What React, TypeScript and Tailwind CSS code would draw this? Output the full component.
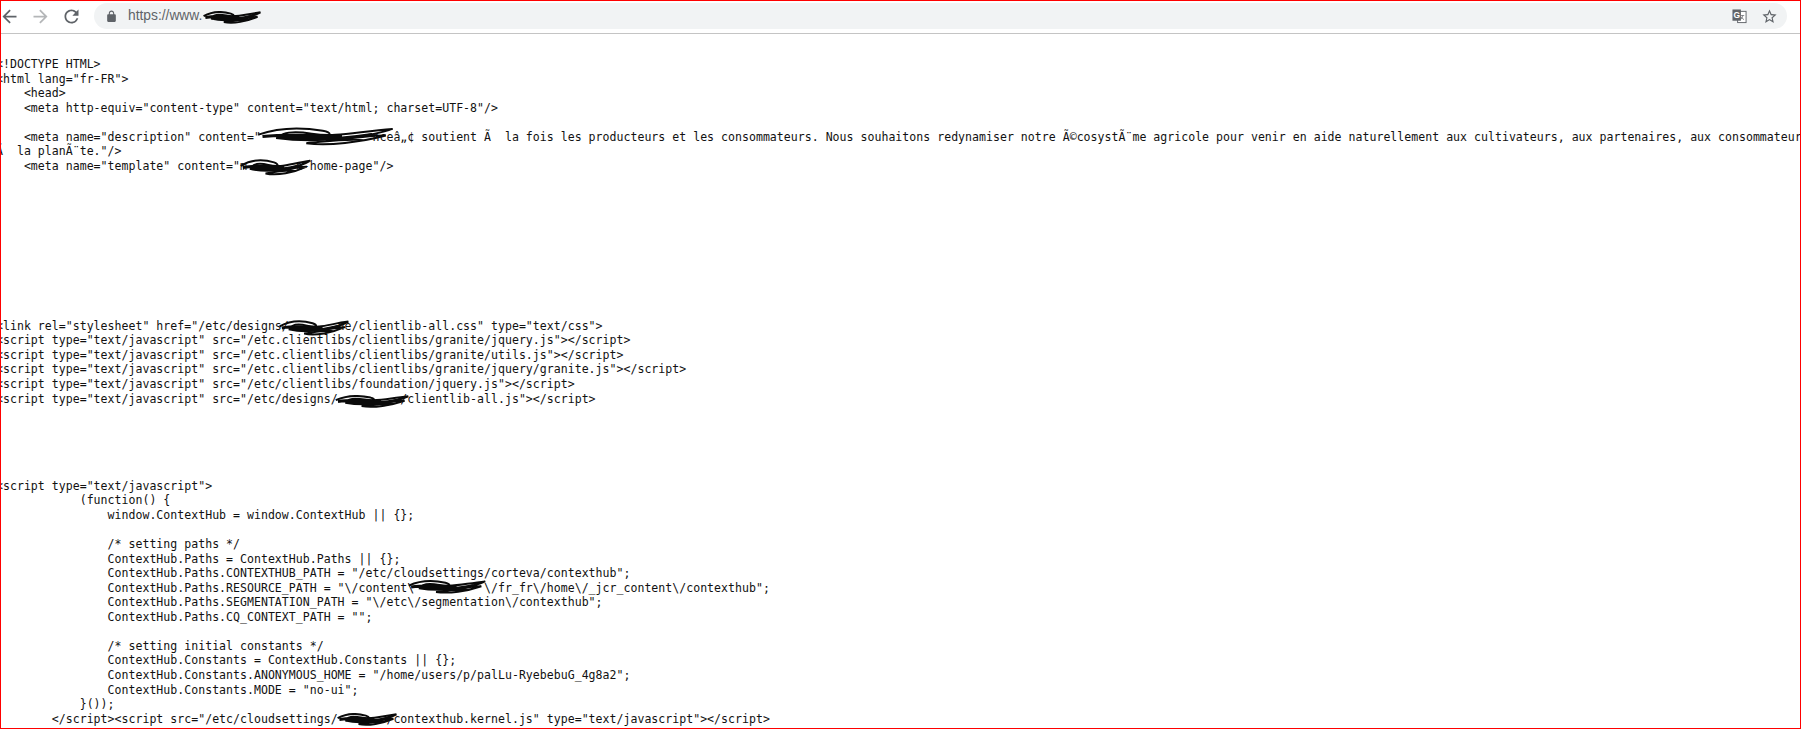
const lines = [
  `<!DOCTYPE HTML>`,
  `<html lang="fr-FR">`,
  `    <head>`,
  `    <meta http-equiv="content-type" content="text/html; charset=UTF-8"/>`,
  ``,
  `    <meta name="description" content="                nceâ„¢ soutient Ã\u00a0 la fois les producteurs et les consommateurs. Nous souhaitons redynamiser notre Ã©cosystÃ¨me agricole pour venir en aide naturellement aux cultivateurs, aux partenaires, aux consommateurs et`,
  `Ã\u00a0 la planÃ¨te."/>`,
  `    <meta name="template" content="m       e-home-page"/>`,
  ``, ``, ``, ``, ``, ``, ``, ``, ``, ``,
  `<link rel="stylesheet" href="/etc/designs/       ne/clientlib-all.css" type="text/css">`,
  `<script type="text/javascript" src="/etc.clientlibs/clientlibs/granite/jquery.js"></script>`,
  `<script type="text/javascript" src="/etc.clientlibs/clientlibs/granite/utils.js"></script>`,
  `<script type="text/javascript" src="/etc.clientlibs/clientlibs/granite/jquery/granite.js"></script>`,
  `<script type="text/javascript" src="/etc/clientlibs/foundation/jquery.js"></script>`,
  `<script type="text/javascript" src="/etc/designs/         /clientlib-all.js"></script>`,
  ``, ``, ``, ``, ``,
  `<script type="text/javascript">`,
  `            (function() {`,
  `                window.ContextHub = window.ContextHub || {};`,
  ``,
  `                /* setting paths */`,
  `                ContextHub.Paths = ContextHub.Paths || {};`,
  `                ContextHub.Paths.CONTEXTHUB_PATH = "/etc/cloudsettings/corteva/contexthub";`,
  `                ContextHub.Paths.RESOURCE_PATH = "\\/content\\          \\/fr_fr\\/home\\/_jcr_content\\/contexthub";`,
  `                ContextHub.Paths.SEGMENTATION_PATH = "\\/etc\\/segmentation\\/contexthub";`,
  `                ContextHub.Paths.CQ_CONTEXT_PATH = "";`,
  ``,
  `                /* setting initial constants */`,
  `                ContextHub.Constants = ContextHub.Constants || {};`,
  `                ContextHub.Constants.ANONYMOUS_HOME = "/home/users/p/palLu-RyebebuG_4g8a2";`,
  `                ContextHub.Constants.MODE = "no-ui";`,
  `            }());`,
  `        </script><script src="/etc/cloudsettings/       /contexthub.kernel.js" type="text/javascript"></script>`,
];

// marker scrawl laid over the source text
const Scribble = ({ className }: { className: string }) => (
  <svg
    className={`absolute ${className}`}
    viewBox="0 0 100 20"
    preserveAspectRatio="none"
    fill="none"
    stroke="#0a0a0a"
  >
    <path
      d="M1 8C15 1 32 0 48 4C62 8 44 15 26 12C10 10 20 3 40 7C58 11 72 5 99 2C84 10 66 11 50 15C66 12 82 9 94 9C76 16 52 20 36 17C52 15 66 12 78 14"
      strokeWidth="2"
      vectorEffect="non-scaling-stroke"
    />
    <path
      d="M4 10C24 7 44 9 62 10C46 13 30 12 14 11C34 15 56 14 84 8"
      strokeWidth="3"
      vectorEffect="non-scaling-stroke"
    />
  </svg>
);

const Icon = ({ d, className }: { d: string; className: string }) => (
  <svg viewBox="0 0 24 24" fill="currentColor" className={`shrink-0 ${className}`}>
    <path d={d} />
  </svg>
);

const ARROW_LEFT = "M20 11H7.83l5.59-5.59L12 4l-8 8 8 8 1.41-1.41L7.83 13H20v-2z";
const ARROW_RIGHT = "M4 11h12.17l-5.59-5.59L12 4l8 8-8 8-1.41-1.41L16.17 13H4v-2z";
const RELOAD =
  "M17.65 6.35A7.958 7.958 0 0 0 12 4c-4.42 0-7.99 3.58-7.99 8s3.57 8 7.99 8c3.73 0 6.84-2.55 7.73-6h-2.08A5.99 5.99 0 0 1 12 18c-3.31 0-6-2.69-6-6s2.69-6 6-6c1.66 0 3.14.69 4.22 1.78L13 11h7V4l-2.35 2.35z";
const LOCK =
  "M18 8h-1V6c0-2.76-2.24-5-5-5S7 3.24 7 6v2H6c-1.1 0-2 .9-2 2v10c0 1.1.9 2 2 2h12c1.1 0 2-.9 2-2V10c0-1.1-.9-2-2-2zM9 6c0-1.66 1.34-3 3-3s3 1.34 3 3v2H9V6z";
const STAR =
  "M22 9.24l-7.19-.62L12 2 9.19 8.63 2 9.24l5.46 4.73L5.82 21 12 17.27 18.18 21l-1.63-7.03L22 9.24zM12 15.4l-3.76 2.27 1-4.28-3.32-2.88 4.38-.38L12 6.1l1.71 4.04 4.38.38-3.32 2.88 1 4.28L12 15.4z";

const TranslateIcon = () => (
  <svg viewBox="0 0 16 16" className="h-[15px] w-[15px] shrink-0">
    <rect x="6" y="2.5" width="9" height="12" fill="#fff" stroke="#5f6368" strokeWidth="1" />
    <path d="M9.5 7h3.5M11.2 7c0 2-1 3.5-2 4M10 8.5c.5 1.2 1.5 2.2 2.8 2.8" stroke="#5f6368" strokeWidth=".8" fill="none" />
    <rect x="0.5" y="0.5" width="9" height="12" fill="#5f6368" />
    <text x="5" y="10" textAnchor="middle" fontSize="9" fontWeight="700" fontFamily="Liberation Sans, sans-serif" fill="#fff">
      G
    </text>
  </svg>
);

const App = () => {
  return (
    <div className="relative flex h-[729px] w-full flex-col overflow-hidden border border-[#ff0000] bg-white">
      {/* Browser toolbar */}
      <div className="flex h-[33px] shrink-0 items-center gap-[10px] border-b border-[#c4c4c4] pb-[2px] pl-0 pr-[13px]">
        <Icon d={ARROW_LEFT} className="-ml-[2px] h-[21px] w-[21px] text-[#5f6368]" />
        <Icon d={ARROW_RIGHT} className="h-[21px] w-[21px] text-[#b4b6b8]" />
        <Icon d={RELOAD} className="h-[21px] w-[21px] text-[#5f6368]" />
        <div className="ml-[2px] flex h-[26px] flex-1 items-center rounded-full bg-[#f1f3f4] pl-[11px] pr-[9px]">
          <Icon d={LOCK} className="h-[13px] w-[13px] text-[#5f6368]" />
          <span className="ml-[10px] font-['Liberation_Sans',sans-serif] text-[13.8px] text-[#5f6368]">https://www.</span>
          <div className="ml-auto flex items-center gap-[14px]">
            <TranslateIcon />
            <Icon d={STAR} className="h-[17px] w-[17px] text-[#5f6368]" />
          </div>
        </div>
      </div>

      {/* Page source */}
      <pre className="-ml-[5px] flex-1 overflow-hidden whitespace-pre pt-[23px] font-['DejaVu_Sans_Mono',monospace] text-[11.55px] leading-[14.54px] tracking-[0.02px] text-[#111]">
        {lines.join("\n")}
      </pre>

      {/* Redactions */}
      <Scribble className="left-[202px] top-[10px] h-[13px] w-[58px]" />
      <Scribble className="left-[256px] top-[126px] h-[19px] w-[137px]" />
      <Scribble className="left-[239px] top-[158px] h-[17px] w-[71px]" />
      <Scribble className="left-[278px] top-[319px] h-[16px] w-[70px]" />
      <Scribble className="left-[334px] top-[394px] h-[13px] w-[74px]" />
      <Scribble className="left-[407px] top-[579px] h-[14px] w-[78px]" />
      <Scribble className="left-[336px] top-[712px] h-[13px] w-[60px]" />
    </div>
  );
};

export default App;
